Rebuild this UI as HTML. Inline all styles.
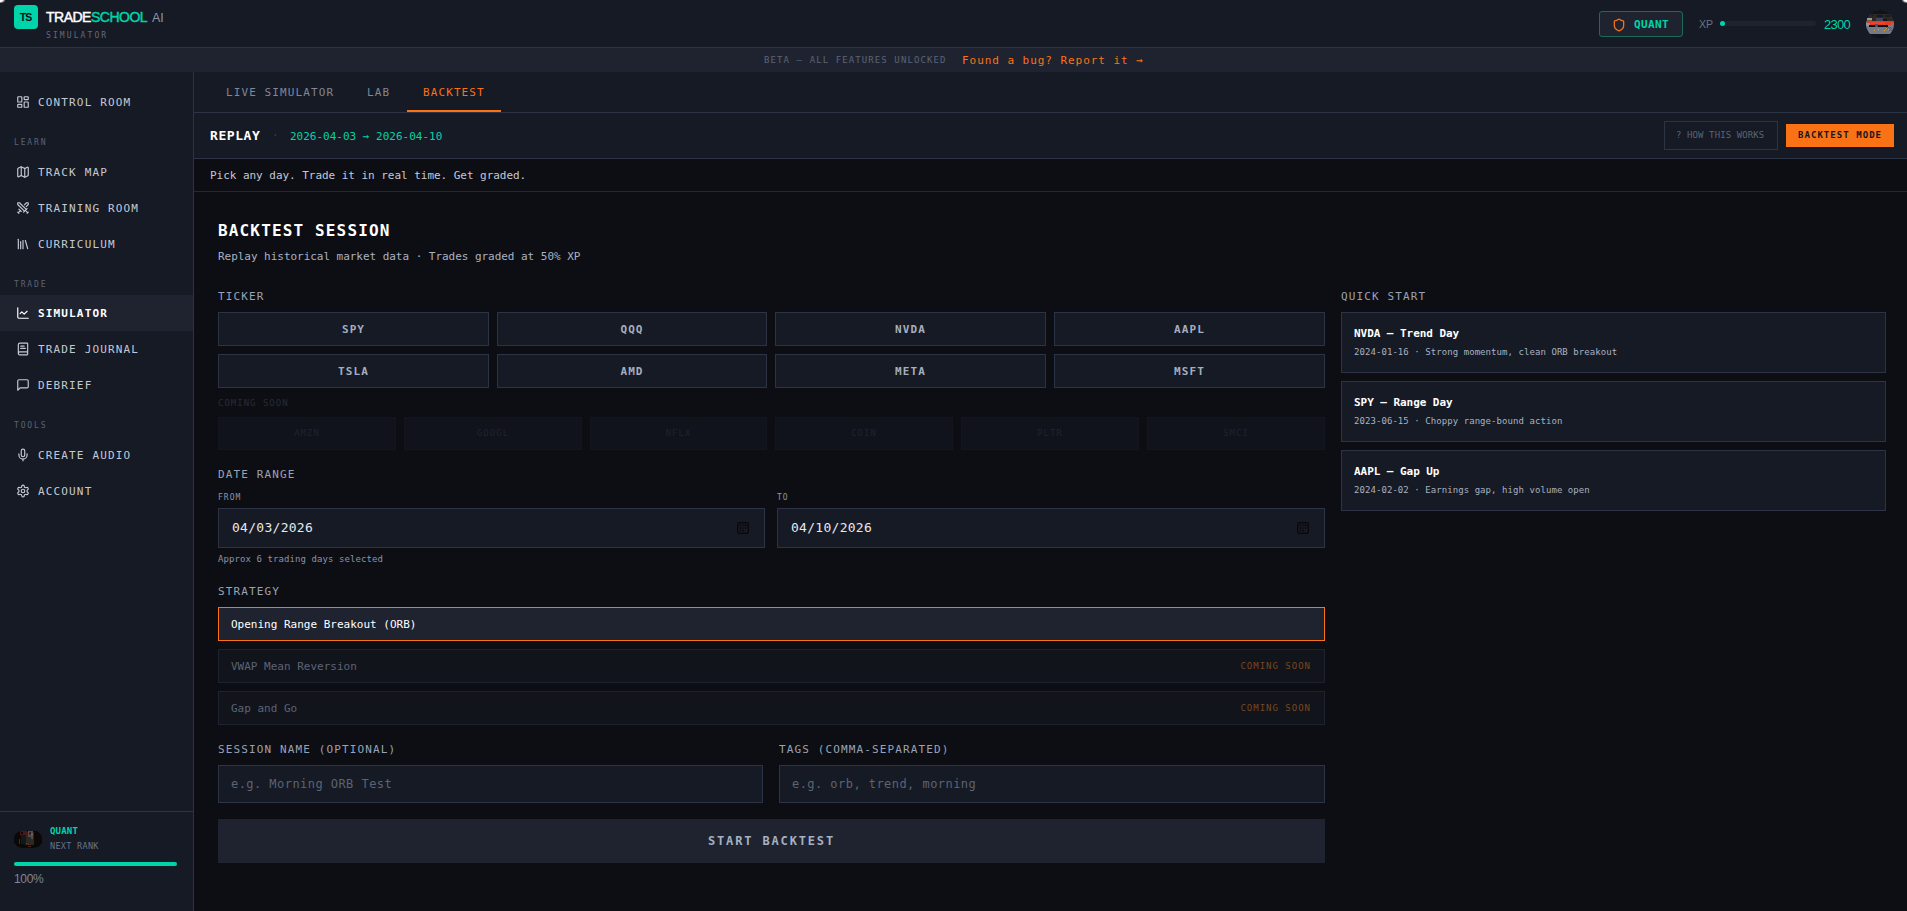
<!DOCTYPE html>
<html lang="en">
<head>
<meta charset="utf-8">
<title>TradeSchool AI — Simulator</title>
<style>
*{box-sizing:border-box;margin:0;padding:0}
html,body{width:1907px;height:911px;overflow:hidden;background:#0d0e14}
body{font-family:"DejaVu Sans Mono","Liberation Mono",monospace;color:#e6e8ee;position:relative;-webkit-font-smoothing:antialiased}
.abs{position:absolute}
.t{position:absolute;white-space:nowrap;line-height:1}
svg{display:block}

/* ---------- header ---------- */
#hdr{position:absolute;left:0;top:0;width:1907px;height:48px;background:#161a24;border-bottom:1px solid #2b3345}
#logo{position:absolute;left:14px;top:5px;width:24px;height:24px;border-radius:4px;background:#00d4aa;color:#0d0e14;
  font-family:"Liberation Sans",sans-serif;font-weight:bold;font-size:10.500px;line-height:25px;text-align:center;letter-spacing:-1.1px;text-indent:-1.1px}
#brand{left:46px;top:10px;font-family:"Liberation Sans",sans-serif;font-size:14px;font-weight:normal;-webkit-text-stroke:0.45px;letter-spacing:-0.5px;color:#fff}
#brand .g{color:#00d4aa}
#brand .ai{color:#8d95a8;font-weight:normal;-webkit-text-stroke:0;font-size:12.500px;letter-spacing:0;margin-left:2px}
#sim{left:46px;top:32px;font-size:8px;letter-spacing:2.1px;color:#626a7e}

#rank{position:absolute;left:1599px;top:11px;width:84px;height:26px;border:1px solid #1a6a57;border-radius:3px;background:#1f2330}
#rank svg{position:absolute;left:12px;top:6px}
#rank span{left:34px;top:7px;font-size:11px;font-weight:bold;color:#00d4aa;letter-spacing:0.4px}
#xp{left:1699px;top:19px;font-family:"Liberation Sans",sans-serif;font-size:10.500px;color:#6b7387}
#xpbar{position:absolute;left:1720px;top:21px;width:96px;height:5px;border-radius:3px;background:#1f2330}
#xpbar i{position:absolute;left:0;top:0;width:5px;height:5px;border-radius:3px;background:#00d4aa}
#xpv{left:1824px;top:18px;font-family:"Liberation Sans",sans-serif;font-size:13px;color:#00d4aa;letter-spacing:-0.7px}
#ava{position:absolute;left:1866px;top:10px;width:28px;height:28px;border-radius:50%;overflow:hidden;background:#2a2d36}

/* ---------- banner ---------- */
#ban{position:absolute;left:0;top:48px;width:1907px;height:24px;background:#1f2330}
#ban .b1{left:764px;top:8px;font-size:9px;letter-spacing:1.1px;color:#5b6376}
#ban .b2{left:962px;top:7px;font-size:11px;letter-spacing:0.95px;color:#f97316}

/* ---------- sidebar ---------- */
#side{position:absolute;left:0;top:72px;width:194px;height:839px;background:#161a24;border-right:1px solid #2b3345}
.nav{position:absolute;left:0;width:193px;height:36px}
.nav svg{position:absolute;left:16px;top:11px}
.nav span{position:absolute;left:38px;top:13px;font-size:11px;line-height:12px;letter-spacing:1.15px;color:#c3c9d6;white-space:nowrap}
.nav.on{background:#1f2330}
.nav.on span{color:#fff;font-weight:bold}
.sec{position:absolute;left:14px;margin-top:1px;font-size:8px;line-height:8px;letter-spacing:1.85px;color:#5b6376;white-space:nowrap}
#sfoot{position:absolute;left:0;top:739px;width:193px;height:100px;border-top:1px solid #2b3345}

/* ---------- main ---------- */
#tabs{position:absolute;left:194px;top:72px;width:1713px;height:41px;background:#161a24;border-bottom:1px solid #2b3345}
.tab{position:absolute;top:15px;font-size:11px;line-height:12px;letter-spacing:1.1px;color:#7f879a;white-space:nowrap}
.tab.on{color:#f97316}
#tabul{position:absolute;left:213px;top:38px;width:94px;height:2px;background:#f97316}
#rep{position:absolute;left:194px;top:113px;width:1713px;height:46px;background:#161a24;border-bottom:1px solid #2b3345}
#desc{position:absolute;left:194px;top:159px;width:1713px;height:33px;background:#0d0e14;border-bottom:1px solid #232838}

/* ---------- replay bar ---------- */
#rep .r1{left:16px;top:16px;font-size:13px;font-weight:bold;letter-spacing:0.55px;color:#fff}
#rep .r2{left:78px;top:17px;font-size:11px;color:#3a4052}
#rep .r3{left:96px;top:18px;font-size:11px;color:#00d4aa}
#how{position:absolute;left:1470px;top:8px;width:114px;height:29px;border:1px solid #2b3345}
#how span{left:11px;top:9px;font-size:9px;letter-spacing:0.1px;color:#5b6376}
#bmode{position:absolute;left:1592px;top:11px;width:108px;height:23px;background:#f97316}
#bmode span{left:12px;top:7px;font-size:9px;font-weight:bold;letter-spacing:1.05px;color:#14161d}

/* ---------- content ---------- */
.lbl{position:absolute;margin-top:1px;font-size:11px;line-height:12px;letter-spacing:1.13px;color:#9aa3b5;white-space:nowrap}
.sub{position:absolute;margin-top:2px;font-size:8px;line-height:8px;letter-spacing:1px;color:#8b93a7;white-space:nowrap}
.tk{position:absolute;height:34px;border:1px solid #2b3345;background:#161a24;text-align:center;font-size:11px;font-weight:bold;line-height:34px;letter-spacing:1.1px;color:#a5aebf}
.tk2{position:absolute;top:417px;height:33px;background:#10131b;border:1px solid #13161e;text-align:center;font-size:9px;line-height:31px;letter-spacing:1px;color:#1f232e}
.inp{position:absolute;border:1px solid #2b3345;background:#161a24}
.inp span{position:absolute;white-space:nowrap}
.st{position:absolute;left:218px;width:1107px;height:34px;border:1px solid #1e222e;background:#12141c}
.st span{position:absolute;left:12px;top:11px;font-size:11px;line-height:12px;color:#5b6376;white-space:nowrap}
.st em{position:absolute;right:13px;top:11px;font-style:normal;font-size:9px;line-height:10px;letter-spacing:1px;color:#7a461c;white-space:nowrap}
.st.on{border-color:#f97316;background:#1f2330}
.st.on span{color:#fff}
.qs{position:absolute;left:1341px;width:545px;height:61px;border:1px solid #2b3345;background:#161a24}
.qs b{position:absolute;left:12px;top:15px;font-size:11px;line-height:12px;color:#fff;white-space:nowrap;letter-spacing:-0.05px}
.qs span{position:absolute;left:12px;top:34px;font-size:9px;line-height:10px;color:#aab2c2;white-space:nowrap;letter-spacing:0.065px}
#go{position:absolute;left:218px;top:819px;width:1107px;height:44px;background:#1f2330;text-align:center;font-size:12px;font-weight:bold;line-height:44px;letter-spacing:1.85px;color:#a6b0c2}
</style>
</head>
<body>

<div id="hdr">
  <div id="logo">TS</div>
  <div class="t" id="brand">TRADE<span class="g">SCHOOL</span> <span class="ai">AI</span></div>
  <div class="t" id="sim">SIMULATOR</div>
  <div id="rank">
    <svg width="14" height="14" viewBox="0 0 24 24" fill="none" stroke="#f97316" stroke-width="2.2" stroke-linecap="round" stroke-linejoin="round"><path d="M20 13c0 5-3.5 7.5-7.66 8.95a1 1 0 0 1-.67-.01C7.5 20.500 4 18 4 13V6a1 1 0 0 1 1-1c2 0 4.500-1.200 6.240-2.720a1.170 1.170 0 0 1 1.520 0C14.510 3.810 17 5 19 5a1 1 0 0 1 1 1z"/></svg>
    <span class="t">QUANT</span>
  </div>
  <div class="t" id="xp">XP</div>
  <div id="xpbar"><i></i></div>
  <div class="t" id="xpv">2300</div>
  <div id="ava">
    <svg width="28" height="28" viewBox="0 0 28 28" shape-rendering="crispEdges"><rect width="28" height="28" fill="#10131a"/><rect y="4" width="28" height="7" fill="#2a2926"/><rect x="11" y="5" width="6" height="2" fill="#17181c"/><rect x="19" y="5" width="5" height="2" fill="#1a1b20"/><rect x="5" y="5" width="3" height="1" fill="#1d1d1f"/><rect x="1" y="8" width="5" height="2" fill="#9a9da8"/><rect x="1" y="10" width="5" height="1" fill="#7a5a3a"/><rect x="10" y="8" width="7" height="3" fill="#3b465c"/><rect x="17" y="9" width="4" height="2" fill="#15161b"/><rect y="11" width="28" height="13" fill="#767a86"/><rect x="0" y="13" width="5" height="3" fill="#8d919d"/><path d="M1 11h26v2h-2v2h-3v1h-15v-1h-3v-2h-3z" fill="#e23b23"/><rect x="5" y="12" width="14" height="2" fill="#ee4428"/><rect x="3" y="15" width="6" height="2" fill="#0c0d12"/><rect x="12" y="15" width="10" height="2" fill="#0c0d12"/><rect x="9" y="14" width="3" height="3" fill="#4a5262"/><g fill="#d9a13a"><rect x="8" y="20" width="1" height="1"/><rect x="12" y="19" width="1" height="1"/><rect x="18" y="20" width="1" height="1"/><rect x="20" y="18" width="1" height="1"/><rect x="22" y="19" width="1" height="1"/></g><g fill="#555966"><rect x="20" y="17" width="1" height="1"/><rect x="22" y="17" width="1" height="1"/><rect x="24" y="17" width="1" height="1"/><rect x="21" y="18" width="1" height="1"/><rect x="23" y="18" width="1" height="1"/><rect x="25" y="18" width="1" height="1"/><rect x="24" y="19" width="1" height="1"/><rect x="23" y="20" width="1" height="1"/><rect x="25" y="20" width="1" height="1"/></g><rect y="23.500" width="28" height="4.500" fill="#10131a"/></svg>
  </div>
</div>

<div class="abs" style="left:0;top:0;width:5px;height:3px;background:radial-gradient(ellipse at 0 0,#fff 0,#fff 35%,rgba(255,255,255,0) 80%)"></div>
<div class="abs" style="left:1902px;top:0;width:5px;height:3px;background:radial-gradient(ellipse at 100% 0,#fff 0,#fff 35%,rgba(255,255,255,0) 80%)"></div>
<div id="ban">
  <div class="t b1">BETA — ALL FEATURES UNLOCKED</div>
  <div class="t b2">Found a bug? Report it →</div>
</div>

<div id="side">
  <div class="nav" style="top:12px"><svg width="14" height="14" viewBox="0 0 24 24" fill="none" stroke="#c3c9d6" stroke-width="2" stroke-linecap="round" stroke-linejoin="round"><rect x="3" y="3" width="7" height="9" rx="1"/><rect x="14" y="3" width="7" height="5" rx="1"/><rect x="14" y="12" width="7" height="9" rx="1"/><rect x="3" y="16" width="7" height="5" rx="1"/></svg><span>CONTROL ROOM</span></div>
  <div class="sec" style="top:66px">LEARN</div>
  <div class="nav" style="top:82px"><svg width="14" height="14" viewBox="0 0 24 24" fill="none" stroke="#c3c9d6" stroke-width="2" stroke-linecap="round" stroke-linejoin="round"><path d="M14.106 5.553a2 2 0 0 0 1.788 0l3.659-1.830A1 1 0 0 1 21 4.619v12.764a1 1 0 0 1-.553.894l-4.553 2.277a2 2 0 0 1-1.788 0l-4.212-2.106a2 2 0 0 0-1.788 0l-3.659 1.830A1 1 0 0 1 3 19.381V6.618a1 1 0 0 1 .553-.894l4.553-2.277a2 2 0 0 1 1.788 0z"/><path d="M15 5.764v15"/><path d="M9 3.236v15"/></svg><span>TRACK MAP</span></div>
  <div class="nav" style="top:118px"><svg width="14" height="14" viewBox="0 0 24 24" fill="none" stroke="#c3c9d6" stroke-width="2" stroke-linecap="round" stroke-linejoin="round"><polyline points="14.5 17.5 3 6 3 3 6 3 17.5 14.5"/><line x1="13" y1="19" x2="19" y2="13"/><line x1="16" y1="16" x2="20" y2="20"/><line x1="19" y1="21" x2="21" y2="19"/><polyline points="14.5 6.5 18 3 21 3 21 6 17.5 9.5"/><line x1="5" y1="14" x2="9" y2="18"/><line x1="7" y1="17" x2="4" y2="20"/><line x1="3" y1="19" x2="5" y2="21"/></svg><span>TRAINING ROOM</span></div>
  <div class="nav" style="top:154px"><svg width="14" height="14" viewBox="0 0 24 24" fill="none" stroke="#c3c9d6" stroke-width="2" stroke-linecap="round" stroke-linejoin="round"><path d="m16 6 4 14"/><path d="M12 6v14"/><path d="M8 8v12"/><path d="M4 4v16"/></svg><span>CURRICULUM</span></div>
  <div class="sec" style="top:208px">TRADE</div>
  <div class="nav on" style="top:223px"><svg width="14" height="14" viewBox="0 0 24 24" fill="none" stroke="#ffffff" stroke-width="2" stroke-linecap="round" stroke-linejoin="round"><path d="M3 3v16a2 2 0 0 0 2 2h16"/><path d="m19 9-5 5-4-4-3 3"/></svg><span>SIMULATOR</span></div>
  <div class="nav" style="top:259px"><svg width="14" height="14" viewBox="0 0 24 24" fill="none" stroke="#c3c9d6" stroke-width="2" stroke-linecap="round" stroke-linejoin="round"><path d="M4 19.500v-15A2.500 2.500 0 0 1 6.500 2H19a1 1 0 0 1 1 1v18a1 1 0 0 1-1 1H6.500a1 1 0 0 1 0-5H20"/><path d="M8 11h8"/><path d="M8 7h6"/></svg><span>TRADE JOURNAL</span></div>
  <div class="nav" style="top:295px"><svg width="14" height="14" viewBox="0 0 24 24" fill="none" stroke="#c3c9d6" stroke-width="2" stroke-linecap="round" stroke-linejoin="round"><path d="M21 15a2 2 0 0 1-2 2H7l-4 4V5a2 2 0 0 1 2-2h14a2 2 0 0 1 2 2z"/></svg><span>DEBRIEF</span></div>
  <div class="sec" style="top:349px">TOOLS</div>
  <div class="nav" style="top:365px"><svg width="14" height="14" viewBox="0 0 24 24" fill="none" stroke="#c3c9d6" stroke-width="2" stroke-linecap="round" stroke-linejoin="round"><path d="M12 2a3 3 0 0 0-3 3v7a3 3 0 0 0 6 0V5a3 3 0 0 0-3-3Z"/><path d="M19 10v2a7 7 0 0 1-14 0v-2"/><line x1="12" y1="19" x2="12" y2="22"/></svg><span>CREATE AUDIO</span></div>
  <div class="nav" style="top:401px"><svg width="14" height="14" viewBox="0 0 24 24" fill="none" stroke="#c3c9d6" stroke-width="2" stroke-linecap="round" stroke-linejoin="round"><path d="M12.220 2h-.440a2 2 0 0 0-2 2v.180a2 2 0 0 1-1 1.730l-.430.250a2 2 0 0 1-2 0l-.150-.080a2 2 0 0 0-2.730.730l-.220.380a2 2 0 0 0 .730 2.730l.150.100a2 2 0 0 1 1 1.720v.510a2 2 0 0 1-1 1.740l-.150.090a2 2 0 0 0-.730 2.730l.220.380a2 2 0 0 0 2.730.730l.150-.080a2 2 0 0 1 2 0l.430.250a2 2 0 0 1 1 1.730V20a2 2 0 0 0 2 2h.440a2 2 0 0 0 2-2v-.180a2 2 0 0 1 1-1.730l.430-.250a2 2 0 0 1 2 0l.150.080a2 2 0 0 0 2.730-.730l.220-.390a2 2 0 0 0-.730-2.730l-.150-.080a2 2 0 0 1-1-1.740v-.500a2 2 0 0 1 1-1.740l.150-.090a2 2 0 0 0 .730-2.730l-.220-.380a2 2 0 0 0-2.730-.730l-.150.080a2 2 0 0 1-2 0l-.430-.250a2 2 0 0 1-1-1.730V4a2 2 0 0 0-2-2z"/><circle cx="12" cy="12" r="3"/></svg><span>ACCOUNT</span></div>
  <div id="sfoot">
    <div class="abs" style="left:14px;top:19px;width:28px;height:16.500px;border-radius:8.500px;overflow:hidden;background:#0b0808"><svg width="28" height="16" viewBox="0 0 28 16" shape-rendering="crispEdges"><rect width="28" height="16" fill="#0b0808"/><rect x="11" y="1" width="9" height="13" fill="#2c2923"/><rect x="6" y="0" width="7" height="4" fill="#431a1d"/><rect x="7" y="1" width="2" height="2" fill="#0b0808"/><rect x="14" y="0" width="5" height="6" fill="#68452f"/><rect x="15" y="1" width="2" height="3" fill="#2c2923"/><rect x="17" y="3" width="2" height="1" fill="#62789a"/><rect x="16" y="5" width="1" height="1" fill="#3a5a9a"/><rect x="18" y="5" width="1" height="2" fill="#62789a"/><rect x="17" y="5" width="2" height="3" fill="#68452f"/><rect x="7" y="4" width="5" height="9" fill="#14161e"/><rect x="5" y="8" width="1" height="5" fill="#5a1f22"/><rect x="12" y="12" width="1" height="1" fill="#5a4a2a"/><rect x="14" y="13" width="1" height="1" fill="#5a4a2a"/><rect x="14" y="15" width="3" height="1" fill="#5a1f22"/><rect x="20" y="0" width="8" height="16" fill="#0b0808"/></svg></div>
    <div class="t" style="left:50px;top:15px;font-size:9px;font-weight:bold;color:#00d4aa;letter-spacing:0.2px">QUANT</div>
    <div class="t" style="left:50px;top:30px;font-size:8.500px;color:#6b7387;letter-spacing:0.3px">NEXT RANK</div>
    <div class="abs" style="left:14px;top:50px;width:163px;height:4px;border-radius:2px;background:#00d4aa"></div>
    <div class="t" style="left:14px;top:61px;font-family:'Liberation Sans',sans-serif;font-size:12px;color:#7f879a;letter-spacing:-0.3px">100%</div>
  </div>
</div>

<div id="tabs">
  <div class="tab" style="left:32px">LIVE SIMULATOR</div>
  <div class="tab" style="left:173px">LAB</div>
  <div class="tab on" style="left:229px">BACKTEST</div>
  <div id="tabul"></div>
</div>

<div id="rep">
  <div class="t r1">REPLAY</div>
  <div class="t r2">·</div>
  <div class="t r3">2026-04-03 → 2026-04-10</div>
  <div id="how"><span class="t">? HOW THIS WORKS</span></div>
  <div id="bmode"><span class="t">BACKTEST MODE</span></div>
</div>

<div id="desc">
  <div class="t" style="left:16px;top:11px;font-size:11px;letter-spacing:-0.035px;color:#c3c9d6">Pick any day. Trade it in real time. Get graded.</div>
</div>

<div class="t" style="left:218px;top:223px;font-size:16px;font-weight:bold;letter-spacing:1.15px;color:#fff">BACKTEST SESSION</div>
<div class="t" style="left:218px;top:251px;font-size:11px;letter-spacing:-0.035px;color:#aab2c2">Replay historical market data · Trades graded at 50% XP</div>
<div class="lbl" style="left:218px;top:290px">TICKER</div>
<div class="tk" style="left:218px;top:312px;width:271px">SPY</div>
<div class="tk" style="left:497px;top:312px;width:270px">QQQ</div>
<div class="tk" style="left:775px;top:312px;width:271px">NVDA</div>
<div class="tk" style="left:1054px;top:312px;width:271px">AAPL</div>
<div class="tk" style="left:218px;top:354px;width:271px">TSLA</div>
<div class="tk" style="left:497px;top:354px;width:270px">AMD</div>
<div class="tk" style="left:775px;top:354px;width:271px">META</div>
<div class="tk" style="left:1054px;top:354px;width:271px">MSFT</div>
<div class="t" style="left:218px;top:399px;font-size:9px;letter-spacing:1px;color:#262b38">COMING SOON</div>
<div class="tk2" style="left:218px;width:178px">AMZN</div>
<div class="tk2" style="left:404px;width:178px">GOOGL</div>
<div class="tk2" style="left:590px;width:177px">NFLX</div>
<div class="tk2" style="left:775px;width:178px">COIN</div>
<div class="tk2" style="left:961px;width:178px">PLTR</div>
<div class="tk2" style="left:1147px;width:178px">SMCI</div>
<div class="lbl" style="left:218px;top:468px">DATE RANGE</div>
<div class="sub" style="left:218px;top:492px">FROM</div>
<div class="sub" style="left:777px;top:492px">TO</div>
<div class="inp" style="left:218px;top:508px;width:547px;height:40px"><span style="left:13px;top:12px;font-size:13px;line-height:14px;letter-spacing:0.28px;color:#e6e8ee">04/03/2026</span><svg style="position:absolute;right:15px;top:13px" width="12" height="12" viewBox="0 0 12 12" fill="none"><rect x="0.600" y="0.600" width="10.800" height="10.800" rx="1.600" stroke="#0b0707" stroke-width="1.200"/><rect x="1" y="1.200" width="10" height="2.300" fill="#121319"/><path d="M1 3.600h10" stroke="#0e0b0d" stroke-width="0.600"/><g fill="#0b0707"><rect x="2.900" y="5.300" width="1.300" height="1.500"/><rect x="5.400" y="5.500" width="1.500" height="1.200"/><rect x="8" y="5.300" width="1.300" height="1.500"/><rect x="2.900" y="8" width="1.300" height="1.300"/><rect x="5.400" y="8" width="1.700" height="1.300"/></g></svg></div>
<div class="inp" style="left:777px;top:508px;width:548px;height:40px"><span style="left:13px;top:12px;font-size:13px;line-height:14px;letter-spacing:0.28px;color:#e6e8ee">04/10/2026</span><svg style="position:absolute;right:15px;top:13px" width="12" height="12" viewBox="0 0 12 12" fill="none"><rect x="0.600" y="0.600" width="10.800" height="10.800" rx="1.600" stroke="#0b0707" stroke-width="1.200"/><rect x="1" y="1.200" width="10" height="2.300" fill="#121319"/><path d="M1 3.600h10" stroke="#0e0b0d" stroke-width="0.600"/><g fill="#0b0707"><rect x="2.900" y="5.300" width="1.300" height="1.500"/><rect x="5.400" y="5.500" width="1.500" height="1.200"/><rect x="8" y="5.300" width="1.300" height="1.500"/><rect x="2.900" y="8" width="1.300" height="1.300"/><rect x="5.400" y="8" width="1.700" height="1.300"/></g></svg></div>
<div class="t" style="left:218px;top:555px;font-size:9px;color:#8b93a7;letter-spacing:0.08px">Approx 6 trading days selected</div>
<div class="lbl" style="left:218px;top:585px">STRATEGY</div>
<div class="st on" style="top:607px"><span>Opening Range Breakout (ORB)</span></div>
<div class="st" style="top:649px"><span>VWAP Mean Reversion</span><em>COMING SOON</em></div>
<div class="st" style="top:691px"><span>Gap and Go</span><em>COMING SOON</em></div>
<div class="lbl" style="left:218px;top:743px">SESSION NAME (OPTIONAL)</div>
<div class="lbl" style="left:779px;top:743px">TAGS (COMMA-SEPARATED)</div>
<div class="inp" style="left:218px;top:765px;width:545px;height:38px"><span style="left:12px;top:12px;font-size:12px;line-height:13px;color:#5b6376;letter-spacing:0.45px">e.g. Morning ORB Test</span></div>
<div class="inp" style="left:779px;top:765px;width:546px;height:38px"><span style="left:12px;top:12px;font-size:12px;line-height:13px;color:#5b6376;letter-spacing:0.45px">e.g. orb, trend, morning</span></div>
<div id="go">START BACKTEST</div>
<div class="lbl" style="left:1341px;top:290px">QUICK START</div>
<div class="qs" style="top:312px"><b>NVDA — Trend Day</b><span>2024-01-16 · Strong momentum, clean ORB breakout</span></div>
<div class="qs" style="top:381px"><b>SPY — Range Day</b><span>2023-06-15 · Choppy range-bound action</span></div>
<div class="qs" style="top:450px"><b>AAPL — Gap Up</b><span>2024-02-02 · Earnings gap, high volume open</span></div>

</body>
</html>
